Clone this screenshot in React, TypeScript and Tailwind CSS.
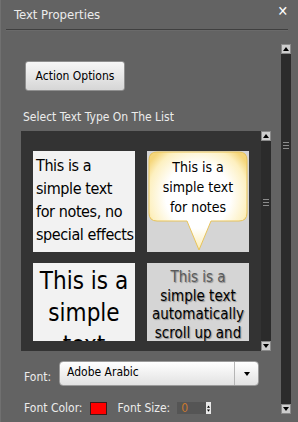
import React from "react";

const font = { fontFamily: '"DejaVu Sans Condensed", "DejaVu Sans", sans-serif' };

const Arrow = ({ up }: { up?: boolean }) => (
  <div className="h-[10px] w-[10px] bg-[#cdcdcd] border border-[#8a8a8a] flex items-center justify-center">
    <svg width="6" height="4" viewBox="0 0 6 4">
      {up ? <polygon points="3,0 6,4 0,4" fill="#000" /> : <polygon points="0,0 6,0 3,4" fill="#000" />}
    </svg>
  </div>
);

const Grip = () => (
  <div className="flex flex-col gap-[2px] px-[2px]">
    <div className="h-px bg-[#8c8c8c]" />
    <div className="h-px bg-[#8c8c8c]" />
    <div className="h-px bg-[#8c8c8c]" />
  </div>
);

const ScrollBar = ({ h, gripTop }: { h: string; gripTop: string }) => (
  <div className={`w-[10px] flex flex-col ${h}`}>
    <Arrow up />
    <div className="flex-1 bg-[#2b2b2b]">
      <div className={gripTop}>
        <Grip />
      </div>
    </div>
    <Arrow />
  </div>
);

export default function App() {
  return (
    <div
      className="w-[298px] h-[422px] bg-[#636363] border-l border-[#707070] flex flex-col overflow-hidden text-[#ececec]"
      style={font}
    >
      {/* header */}
      <div className="h-[29px] flex items-center justify-between pl-[13px] pr-[10px]">
        <span className="text-[13px]">Text Properties</span>
        <span className="text-[14px] font-bold text-white leading-none -mt-[8px]">✕</span>
      </div>
      <div className="ml-[5px] w-[282px] h-px bg-[#3f3f3f]" />
      <div className="ml-[5px] w-[282px] h-px bg-[#6a6a6a]" />

      <div className="flex flex-1">
        <div className="w-[280px] pl-[20px] flex flex-col">
          <button className="mt-[30px] ml-[4px] w-[100px] h-[30px] rounded-[3px] border border-[#8f8f8f] bg-gradient-to-b from-[#f7f7f7] to-[#d6d6d6] text-black text-[12px]">
            Action Options
          </button>
          <div className="mt-[18px] ml-[2px] text-[12px] leading-[16px]">Select Text Type On The List</div>

          {/* list */}
          <div className="mt-[6px] w-[250px] h-[220px] bg-[#333333] flex">
            <div className="w-[240px] h-[210px] overflow-hidden pl-[12px] pt-[20px]">
              <div className="grid grid-cols-[102px_102px] auto-rows-[101px] gap-x-[12px] gap-y-[11px]">
                <div className="bg-[#f2f2f2] text-black text-[16px] leading-[23px] pl-[3px] pt-[3px] tracking-[-0.4px] whitespace-nowrap">
                  This is a<br />simple text<br />for notes, no<br />special effects
                </div>
                <div className="bg-[#d5d5d5] relative">
                  <svg className="absolute inset-0" width="102" height="101" viewBox="0 0 102 101">
                    <defs>
                      <radialGradient id="bub" cx="50%" cy="45%" r="60%">
                        <stop offset="55%" stopColor="#ffffff" />
                        <stop offset="85%" stopColor="#fdf0c0" />
                        <stop offset="100%" stopColor="#f5d67a" />
                      </radialGradient>
                    </defs>
                    <path
                      d="M10,1 H92 Q100,1 100,9 V62 Q100,70 92,70 H64 L52,99 L40,70 H10 Q2,70 2,62 V9 Q2,1 10,1 Z"
                      fill="url(#bub)"
                      stroke="#e8c45a"
                      strokeWidth="1"
                    />
                  </svg>
                  <div className="relative text-center text-black text-[14px] leading-[20px] pt-[6px]">
                    This is a<br />simple text<br />for notes
                  </div>
                </div>
                <div className="bg-[#f2f2f2] text-black text-[24px] leading-[32px] text-center pt-[2px] overflow-hidden whitespace-nowrap">
                  This is a<br />simple<br />text
                </div>
                <div
                  className="bg-[#d5d5d5] text-center text-[15px] leading-[18.5px] pt-[5px] text-black"
                  style={{ textShadow: "1px 1px 1px rgba(0,0,0,0.35)" }}
                >
                  <span className="text-[#5a5a5a]">This is a</span>
                  <br />
                  simple text automatically scroll up and down
                </div>
              </div>
            </div>
            <ScrollBar h="h-[220px]" gripTop="mt-[58px]" />
          </div>

          {/* font row */}
          <div className="mt-[10px] flex items-center">
            <span className="ml-[3px] w-[35px] text-[12px] leading-none mt-[6px]">Font:</span>
            <div className="w-[200px] h-[25px] rounded-[4px] border border-[#9a9a9a] bg-gradient-to-b from-[#ffffff] to-[#e2e2e2] flex">
              <span className="flex-1 text-black text-[12px] leading-none pl-[7px] pt-[4px]">Adobe Arabic</span>
              <div className="w-[24px] border-l border-[#b5b5b5] flex items-center justify-center">
                <svg width="6" height="4" viewBox="0 0 6 4">
                  <polygon points="0,0 6,0 3,4" fill="#000" />
                </svg>
              </div>
            </div>
          </div>

          <div className="mt-[13px] flex items-center text-[12px]">
            <span className="ml-[3px]">Font Color:</span>
            <div className="ml-[7px] w-[17px] h-[13px] bg-[#ff0000] border border-[#3a1a1a]" />
            <span className="ml-[11px]">Font Size:</span>
            <div className="ml-[7px] w-[34px] h-[12px] bg-[#555555] flex items-center">
              <span className="ml-[4px] text-[#c8782f] text-[12px] leading-none flex-1">0</span>
              <div className="w-[5px] h-[12px] bg-[#e8e8e8] flex flex-col items-center justify-center gap-[1px]">
                <svg width="3" height="3" viewBox="0 0 4 3"><polygon points="2,0 4,3 0,3" fill="#000" /></svg>
                <svg width="3" height="3" viewBox="0 0 4 3"><polygon points="0,0 4,0 2,3" fill="#000" /></svg>
              </div>
            </div>
          </div>
        </div>
        <div className="mt-[13px]">
          <ScrollBar h="h-[370px]" gripTop="mt-[88px]" />
        </div>
      </div>
    </div>
  );
}
